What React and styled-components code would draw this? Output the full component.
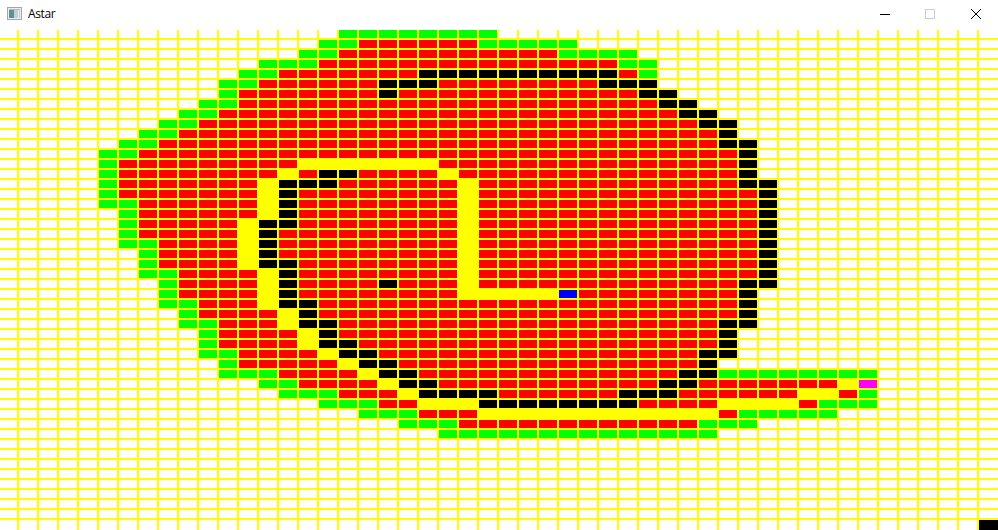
import React from 'react';
import styled, { createGlobalStyle } from 'styled-components';

// one entry per row of the board: <kind><last column of that run>, the rest of the row is empty
const RUNS = [
  '.16 g24',
  '.15 g17 r23 g28',
  '.14 g16 r27 g31',
  '.12 g15 r30 g32',
  '.11 g13 r20 k30 r31 g32',
  '.10 g12 r18 k21 r29 k32',
  '.10 g11 r18 k19 r31 k33',
  '.9 g11 r32 k34',
  '.8 g10 r33 k35',
  '.7 g9 r34 k36',
  '.6 g8 r35 k36',
  '.5 g7 r35 k37',
  '.4 g6 r36 k37',
  '.4 g5 r14 y21 r36 k37',
  '.4 g5 r13 y14 r15 k17 r21 y22 r36 k37',
  '.4 g5 r12 y13 k16 r22 y23 r36 k38',
  '.4 g5 r12 y13 k14 r22 y23 r37 k38',
  '.4 g6 r12 y13 k14 r22 y23 r37 k38',
  '.5 g6 r12 y13 k14 r22 y23 r37 k38',
  '.5 g6 r11 y12 k14 r22 y23 r37 k38',
  '.5 g6 r11 y12 k13 r22 y23 r37 k38',
  '.5 g7 r11 y12 k13 r22 y23 r37 k38',
  '.6 g7 r11 y12 k13 r22 y23 r37 k38',
  '.6 g7 r11 y12 k14 r22 y23 r37 k38',
  '.6 g8 r12 y13 k14 r22 y23 r37 k38',
  '.7 g8 r12 y13 k14 r18 k19 r22 y23 r36 k38',
  '.7 g8 r12 y13 k14 r22 y27 b28 r36 k37',
  '.7 g9 r12 y13 k15 r36 k37',
  '.8 g9 r13 y14 k15 r36 k37',
  '.8 g10 r13 y14 k16 r35 k37',
  '.9 g10 r14 y15 k16 r35 k36',
  '.9 g10 r14 y15 k17 r35 k36',
  '.9 g11 r15 y16 k18 r34 k36',
  '.10 g11 r16 y17 k19 r34 k35',
  '.10 g13 r17 y18 k20 r33 k35 g43',
  '.12 g14 r18 y19 k21 r32 k34 r41 y42 m43',
  '.13 g16 r19 y20 k24 r30 k33 r39 y41 r42 g43',
  '.15 g18 r20 y23 k31 r35 y39 r40 g43',
  '.17 g20 r23 y35 r36 g41',
  '.19 g22 r34 g37',
  '.21 g35',
  '', '', '', '', '', '', '', '',
  '.48 k49',
];

const COLS = 50;

const expandRow = (runs) => {
  const row = [];
  runs.split(' ').filter(Boolean).forEach((run) => {
    const last = Number(run.slice(1));
    while (row.length <= last) row.push(run[0]);
  });
  while (row.length < COLS) row.push('.');
  return row;
};

const COLORS = {
  '.': '#ffffff',
  g: '#00ff00',
  r: '#ff0000',
  k: '#000000',
  y: '#ffff00',
  b: '#0000ff',
  m: '#ff00ff',
};

const App = () => {
  return (
    <Window>
      <GlobalStyle />
      <TitleBar>
        <AppIcon viewBox="0 0 15 13">
          <rect x="0.5" y="0.5" width="14" height="12" fill="#eceef0" stroke="#a3a5a8" />
          <rect x="2" y="2" width="11" height="1" fill="#b4b7bb" />
          <rect x="2" y="3" width="5" height="8" fill="#5f8f96" />
          <rect x="7" y="3" width="4" height="8" fill="#bcd4d1" />
          <rect x="12" y="3" width="1" height="8" fill="#c6cacb" />
        </AppIcon>
        <Title>Astar</Title>
        <Controls>
          <ControlButton $gap={0}>
            <svg width="10" height="10" viewBox="0 0 10 10">
              <path d="M0 5.5H10" stroke="#000" fill="none" />
            </svg>
          </ControlButton>
          <ControlButton $gap={35}>
            <svg width="10" height="10" viewBox="0 0 10 10">
              <rect x="0.5" y="0.5" width="9" height="9" stroke="#cccccc" fill="none" />
            </svg>
          </ControlButton>
          <ControlButton $gap={36}>
            <svg width="10" height="10" viewBox="0 0 10 10">
              <path d="M0 0L10 10M10 0L0 10" stroke="#000" fill="none" />
            </svg>
          </ControlButton>
        </Controls>
      </TitleBar>
      <Board>
        {RUNS.map((runs, r) =>
          expandRow(runs).map((kind, c) => <Cell key={`${r}-${c}`} $kind={kind} />)
        )}
      </Board>
    </Window>
  );
};

export default App;

const GlobalStyle = createGlobalStyle`
  html, body {
    margin: 0;
    padding: 0;
    background: #ffffff;
    overflow: hidden;
  }
`

const Window = styled.div`
  width: 998px;
  height: 530px;
  display: flex;
  flex-direction: column;
  overflow: hidden;
`

const TitleBar = styled.div`
  height: 30px;
  flex-shrink: 0;
  display: flex;
  align-items: center;
  padding-left: 7px;
  background: #ffffff;
`

const AppIcon = styled.svg`
  width: 15px;
  height: 13px;
  flex-shrink: 0;
  margin-bottom: 3px;
`

const Title = styled.span`
  margin-left: 6px;
  margin-bottom: 3px;
  font-family: "Open Sans", "Liberation Sans", sans-serif;
  font-size: 12px;
  letter-spacing: -0.4px;
  color: #000000;
`

const Controls = styled.div`
  margin-left: auto;
  display: flex;
  align-items: center;
  padding-right: 17px;
  padding-bottom: 2px;
  height: 100%;
  box-sizing: border-box;
`

const ControlButton = styled.div`
  display: flex;
  margin-left: ${(props) => props.$gap}px;
`

const Board = styled.div`
  display: grid;
  grid-template-columns: 17px repeat(48, 18px) 19px;
  grid-template-rows: repeat(49, 8px) 10px;
  gap: 2px;
  background: #ffff00;
`

const Cell = styled.div`
  background: ${(props) => COLORS[props.$kind]};
`
